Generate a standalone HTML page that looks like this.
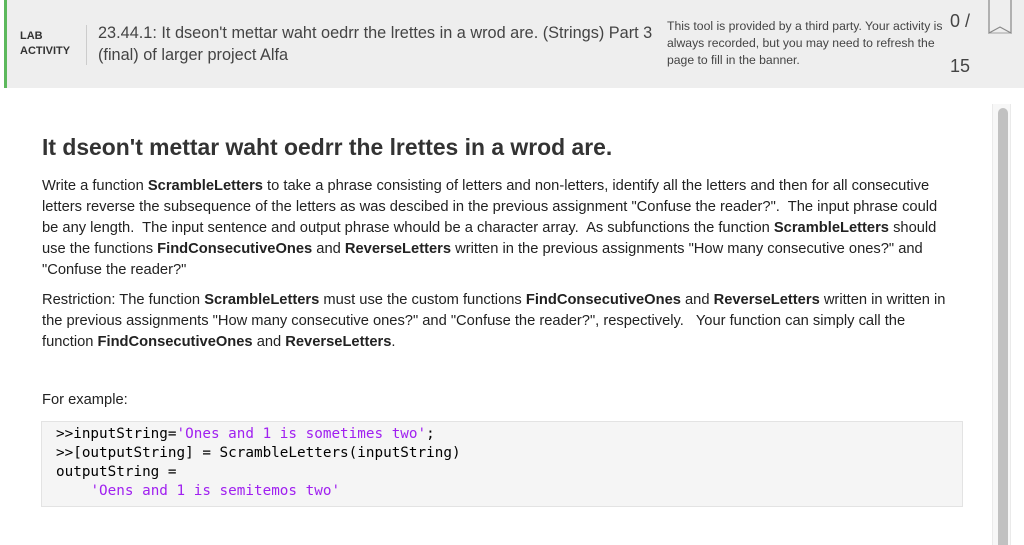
<!DOCTYPE html>
<html><head><meta charset="utf-8"><style>
body{margin:0;width:1024px;height:545px;overflow:hidden;background:#fff;font-family:"Liberation Sans",Arial,sans-serif;position:relative}
.hdr{position:absolute;left:4px;top:0;width:1020px;height:88px;background:#eeeeee;border-left:3px solid #5cb85c;box-sizing:border-box}
.a{position:absolute;white-space:nowrap}
.lab{font-size:11px;font-weight:bold;color:#333;left:20px}
.div{position:absolute;left:86px;top:25px;width:1px;height:40px;background:#ccc}
.title{left:98px;font-size:16.3px;color:#444;line-height:22px;top:22px}
.info{left:667px;top:18px;font-size:12.2px;color:#444;line-height:17px}
.sc{font-size:18px;color:#444}
.content{position:absolute;left:42px;top:0;font-size:14.7px;color:#222;line-height:21px}
h1{position:absolute;left:42px;top:134px;margin:0;font-size:22.9px;font-weight:bold;color:#333;white-space:nowrap}
p{margin:0}
.code{position:absolute;left:41px;top:421px;width:922px;height:86px;background:#f5f5f5;border:1px solid #e3e3e3;font-family:"DejaVu Sans Mono",monospace;font-size:14.3px;line-height:19px;color:#000;padding:3px 0 0 14px;box-sizing:border-box;white-space:pre}
.s{color:#a020f0}
.track{position:absolute;left:992px;top:104px;width:19px;height:441px;background:#f7f7f7;border-left:1px solid #eaeaea;border-right:1px solid #eaeaea;box-sizing:border-box}
.thumb{position:absolute;left:998px;top:108px;width:10px;height:437px;background:#c1c1c1;border-radius:5px 5px 0 0}
</style></head><body>
<div class="hdr"></div>
<div class="a lab" style="top:30px">LAB</div>
<div class="a lab" style="top:45px">ACTIVITY</div>
<div class="div"></div>
<div class="a title">23.44.1: It dseon't mettar waht oedrr the lrettes in a wrod are. (Strings) Part 3<br>(final) of larger project Alfa</div>
<div class="a info">This tool is provided by a third party. Your activity is<br>always recorded, but you may need to refresh the<br>page to fill in the banner.</div>
<div class="a sc" style="left:950px;top:11px">0 /</div>
<div class="a sc" style="left:950px;top:56px">15</div>
<svg class="a" style="left:986px;top:0" width="28" height="40"><path d="M3 0V33L14 27L25 33V0" fill="none" stroke="#888" stroke-width="1.2"/><path d="M3 33L25 33" stroke="#888" stroke-width="0.8"/></svg>
<h1>It dseon't mettar waht oedrr the lrettes in a wrod are.</h1>
<div class="content" style="top:176px;width:905px"><p>Write a function <b>ScrambleLetters</b> to take a phrase consisting of letters and non-letters, identify all the letters and then for all consecutive letters reverse the subsequence of the letters as was descibed in the previous assignment "Confuse the reader?".&nbsp; The input phrase could be any length.&nbsp; The input sentence and output phrase whould be a character array.&nbsp; As subfunctions the function <b>ScrambleLetters</b> should use the functions <b>FindConsecutiveOnes</b> and <b>ReverseLetters</b> written in the previous assignments "How many consecutive ones?" and "Confuse the reader?"</p></div>
<div class="content" style="top:290px;width:910px"><p>Restriction: The function <b>ScrambleLetters</b> must use the custom functions <b>FindConsecutiveOnes</b> and <b>ReverseLetters</b> written in written in the previous assignments "How many consecutive ones?" and "Confuse the reader?", respectively.&nbsp;&nbsp; Your function can simply call the function <b>FindConsecutiveOnes</b> and <b>ReverseLetters</b>.</p></div>
<div class="content" style="top:390px">For example:</div>
<div class="code">&gt;&gt;inputString=<span class="s">'Ones and 1 is sometimes two'</span>;
&gt;&gt;[outputString] = ScrambleLetters(inputString)
outputString =
    <span class="s">'Oens and 1 is semitemos two'</span></div>
<div class="track"></div><div class="thumb"></div>
</body></html>
